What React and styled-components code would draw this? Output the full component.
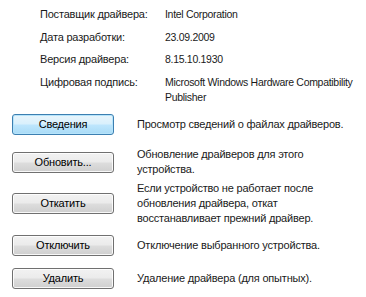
import React from "react";
import styled, { createGlobalStyle, css } from "styled-components";

const Global = createGlobalStyle`
  html, body { margin: 0; padding: 0; background: #ffffff; }
  body {
    font-family: "Liberation Sans", Arial, sans-serif;
    font-size: 11px;
    letter-spacing: -0.2px;
    color: #1a1a1a;
  }
`;

const Page = styled.div`
  width: 366px;
  height: 297px;
  overflow: hidden;
  background: #ffffff;
`;

const InfoGrid = styled.div`
  display: grid;
  grid-template-columns: 125px 201px;
  row-gap: 7.5px;
  padding: 7px 0 0 40px;
  line-height: 15px;
`;

const Label = styled.div`
  white-space: nowrap;
`;

const Value = styled.div`
  font-size: 10.5px;
  letter-spacing: -0.3px;
`;

const Actions = styled.div`
  display: flex;
  flex-direction: column;
  padding-left: 12px;
`;

const Row = styled.div`
  display: grid;
  grid-template-columns: 102px 216px;
  column-gap: 23px;
  align-items: center;
  margin-top: ${(p) => p.$mt}px;
`;

const Button = styled.button`
  box-sizing: border-box;
  width: 102px;
  height: 21px;
  padding: 0;
  font-family: inherit;
  font-size: 11px;
  letter-spacing: -0.2px;
  color: #000;
  border: 1px solid #707070;
  border-radius: 3px;
  box-shadow: inset 0 0 0 1px rgba(255, 255, 255, 0.85);
  background: linear-gradient(
    to bottom,
    #f2f2f2 0%,
    #ebebeb 48%,
    #dddddd 52%,
    #cfcfcf 100%
  );
  ${(p) =>
    p.$default &&
    css`
      border-color: #3c7fb1;
      box-shadow: inset 0 0 0 1px #b6e4fb;
      background: linear-gradient(
        to bottom,
        #e8f5fc 0%,
        #d9f0fc 48%,
        #bee6fd 52%,
        #a9dbf6 100%
      );
    `}
`;

const Desc = styled.div`
  line-height: 15px;
`;

const info = [
  ["Поставщик драйвера:", "Intel Corporation"],
  ["Дата разработки:", "23.09.2009"],
  ["Версия драйвера:", "8.15.10.1930"],
  ["Цифровая подпись:", "Microsoft Windows Hardware Compatibility Publisher"],
];

const actions = [
  { label: "Сведения", text: "Просмотр сведений о файлах драйверов.", mt: 9, def: true },
  { label: "Обновить...", text: "Обновление драйверов для этого устройства.", mt: 12.5 },
  {
    label: "Откатить",
    text: "Если устройство не работает после обновления драйвера, откат восстанавливает прежний драйвер.",
    mt: 3.5,
  },
  { label: "Отключить", text: "Отключение выбранного устройства.", mt: 9 },
  { label: "Удалить", text: "Удаление драйвера (для опытных).", mt: 12 },
];

export default function App() {
  return (
    <Page>
      <Global />
      <InfoGrid>
        {info.map(([l, v]) => (
          <React.Fragment key={l}>
            <Label>{l}</Label>
            <Value>{v}</Value>
          </React.Fragment>
        ))}
      </InfoGrid>
      <Actions>
        {actions.map((a) => (
          <Row key={a.label} $mt={a.mt}>
            <Button $default={a.def}>{a.label}</Button>
            <Desc>{a.text}</Desc>
          </Row>
        ))}
      </Actions>
    </Page>
  );
}
